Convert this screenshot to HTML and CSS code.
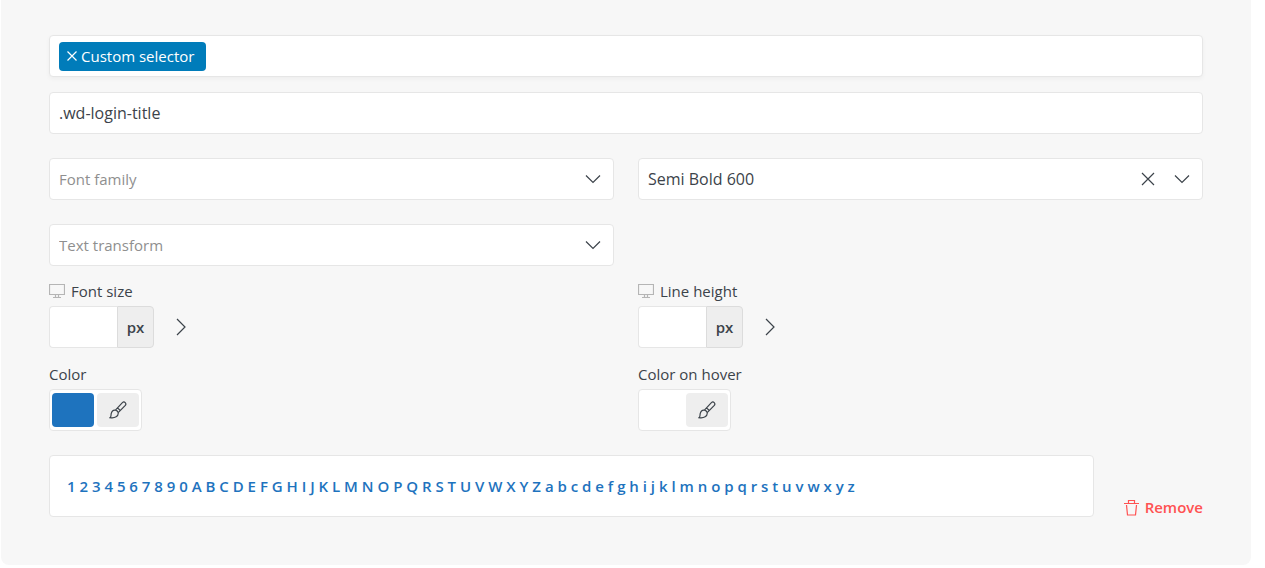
FILE: index.html
```html
<!DOCTYPE html>
<html lang="en">
<head>
  <meta charset="UTF-8">
  <meta name="viewport" content="width=device-width, initial-scale=1.0">
  <title>Typography</title>
  <link rel="stylesheet" href="styles.css">
</head>
<body>
  <form class="panel">
    <div class="tags">
      <button type="button" class="tag">
        <svg width="10" height="10" viewBox="0 0 10 10"><path d="M.5 .5l9 9M9.5 .5l-9 9"/></svg>
        Custom selector
      </button>
    </div>
    <input class="field" type="text" value=".wd-login-title" aria-label="Custom selector">

    <div class="row selects">
      <div class="select-box">
        <select class="field empty" aria-label="Font family">
          <option>Font family</option>
        </select>
        <svg class="arrow" width="16" height="10" viewBox="0 0 16 10"><path d="M1 1.5l7 7 7-7"/></svg>
      </div>
      <div class="select-box">
        <select class="field" aria-label="Font weight">
          <option>Semi Bold 600</option>
        </select>
        <button type="button" class="clear" aria-label="Clear">
          <svg width="14" height="14" viewBox="0 0 14 14"><path d="M1 1l12 12M13 1L1 13"/></svg>
        </button>
        <svg class="arrow" width="16" height="10" viewBox="0 0 16 10"><path d="M1 1.5l7 7 7-7"/></svg>
      </div>
      <div class="select-box">
        <select class="field empty" aria-label="Text transform">
          <option>Text transform</option>
        </select>
        <svg class="arrow" width="16" height="10" viewBox="0 0 16 10"><path d="M1 1.5l7 7 7-7"/></svg>
      </div>
    </div>

    <div class="row sizes">
      <div>
        <label class="label" for="font-size">
          <svg class="screen" width="16" height="16" viewBox="0 0 16 16"><path d="M.5 1.5h15v10H.5zM6.5 11.5v3M9.5 11.5v3M4 14.5h8"/></svg>
          Font size
        </label>
        <div class="size">
          <input class="number" id="font-size" type="text">
          <button type="button" class="unit">px</button>
          <button type="button" class="more" aria-label="Show more devices">
            <svg width="10" height="18" viewBox="0 0 10 18"><path d="M1 1l8 8-8 8"/></svg>
          </button>
        </div>
      </div>
      <div>
        <label class="label" for="line-height">
          <svg class="screen" width="16" height="16" viewBox="0 0 16 16"><path d="M.5 1.5h15v10H.5zM6.5 11.5v3M9.5 11.5v3M4 14.5h8"/></svg>
          Line height
        </label>
        <div class="size">
          <input class="number" id="line-height" type="text">
          <button type="button" class="unit">px</button>
          <button type="button" class="more" aria-label="Show more devices">
            <svg width="10" height="18" viewBox="0 0 10 18"><path d="M1 1l8 8-8 8"/></svg>
          </button>
        </div>
      </div>
    </div>

    <div class="row colors">
      <div>
        <label class="label" for="color">Color</label>
        <div class="color">
          <button type="button" class="swatch blue" id="color"></button>
          <button type="button" class="brush" aria-label="Pick color">
            <svg width="18" height="18" viewBox="0 0 18 18"><path d="M6.4 9.1L13.4 1.6c2-1.7 4.5.7 2.9 2.8L9.2 11.6M6.4 9.1c1.4.2 2.5 1.2 2.8 2.5 .5 3.6-3.3 6-8.2 5.1 1.4-.9.8-2.1 1.2-4 .6-2.5 2.2-3.9 4.2-3.6zM8.5 6.9l2.8 2.6"/></svg>
          </button>
        </div>
      </div>
      <div>
        <label class="label" for="hover-color">Color on hover</label>
        <div class="color">
          <button type="button" class="swatch" id="hover-color"></button>
          <button type="button" class="brush" aria-label="Pick color on hover">
            <svg width="18" height="18" viewBox="0 0 18 18"><path d="M6.4 9.1L13.4 1.6c2-1.7 4.5.7 2.9 2.8L9.2 11.6M6.4 9.1c1.4.2 2.5 1.2 2.8 2.5 .5 3.6-3.3 6-8.2 5.1 1.4-.9.8-2.1 1.2-4 .6-2.5 2.2-3.9 4.2-3.6zM8.5 6.9l2.8 2.6"/></svg>
          </button>
        </div>
      </div>
    </div>

    <div class="footer">
      <div class="preview">1 2 3 4 5 6 7 8 9 0 A B C D E F G H I J K L M N O P Q R S T U V W X Y Z a b c d e f g h i j k l m n o p q r s t u v w x y z</div>
      <button type="button" class="remove">
        <svg width="15" height="17" viewBox="0 0 15 17"><path d="M0 4.5h15M4.5 4.5v-3h6v3M2.5 6l1 10h8l1-10"/></svg>
        Remove
      </button>
    </div>
  </form>
</body>
</html>
```

FILE: styles.css
```css
* {
  box-sizing: border-box;
}

body {
  margin: 0 14px 3px 1px;
  background-color: #fff;
  color: #3c434a;
  font-family: "Open Sans", sans-serif;
  font-size: 15px;
  line-height: 20px;
}

input, select, button {
  font: inherit;
  color: inherit;
}

button {
  padding: 0;
  border: none;
  background: none;
  cursor: pointer;
}

svg {
  display: block;
  fill: none;
  stroke: currentColor;
  stroke-width: 1.2;
}

.panel {
  padding: 35px 48px 48px;
  border-radius: 0 0 8px 8px;
  background-color: #f7f7f7;
}

.tags, .field, .number, .color, .preview {
  border: 1px solid #e6e6e6;
  border-radius: 4px;
  background-color: #fff;
}

.tags {
  display: flex;
  align-items: center;
  height: 42px;
  margin-bottom: 15px;
  padding: 0 9px;
  box-shadow: 0 2px 4px rgba(0, 0, 0, 0.04);
}

.tag {
  display: flex;
  align-items: center;
  gap: 4px;
  height: 29px;
  padding: 0 12px 0 8px;
  border-radius: 4px;
  background-color: #007cba;
  color: #fff;
}

.field {
  display: block;
  width: 100%;
  height: 42px;
  padding: 0 9px;
  font-size: 16px;
  appearance: none;
}

.empty {
  color: #8f8f8f;
  font-size: 15px;
}

.row {
  display: grid;
  grid-template-columns: 1fr 1fr;
  column-gap: 24px;
}

.selects {
  row-gap: 24px;
  margin: 24px 0 15px;
}

.select-box {
  position: relative;
}

.arrow {
  position: absolute;
  top: 16px;
  right: 13px;
  pointer-events: none;
}

.clear {
  position: absolute;
  top: 14px;
  right: 48px;
}

.label {
  display: flex;
  align-items: center;
  gap: 6px;
  width: fit-content;
  margin-bottom: 5px;
}

.screen {
  color: #b5b5b5;
}

.size {
  display: flex;
  align-items: center;
}

.number {
  width: 68px;
  height: 42px;
  padding: 0 9px;
  border-right: none;
  border-radius: 4px 0 0 4px;
}

.unit {
  width: 37px;
  height: 42px;
  border: 1px solid #dcdcdc;
  border-radius: 0 4px 4px 0;
  background-color: #eee;
  font-weight: 600;
}

.more {
  padding: 0 22px;
}

.colors {
  margin: 16px 0 24px;
}

.color {
  display: flex;
  gap: 3px;
  width: fit-content;
  height: 42px;
  padding: 3px 2px;
}

.swatch {
  width: 42px;
  border-radius: 4px;
}

.blue {
  background-color: #1e73be;
}

.brush {
  display: flex;
  align-items: center;
  justify-content: center;
  width: 42px;
  border-radius: 4px;
  background-color: #eee;
}

.footer {
  display: flex;
  align-items: flex-end;
  gap: 30px;
}

.preview {
  flex: 1;
  padding: 20px 17px;
  color: #1e73be;
  font-weight: 600;
}

.remove {
  display: flex;
  align-items: center;
  gap: 6px;
  color: #ff5252;
  font-weight: 600;
}
```
